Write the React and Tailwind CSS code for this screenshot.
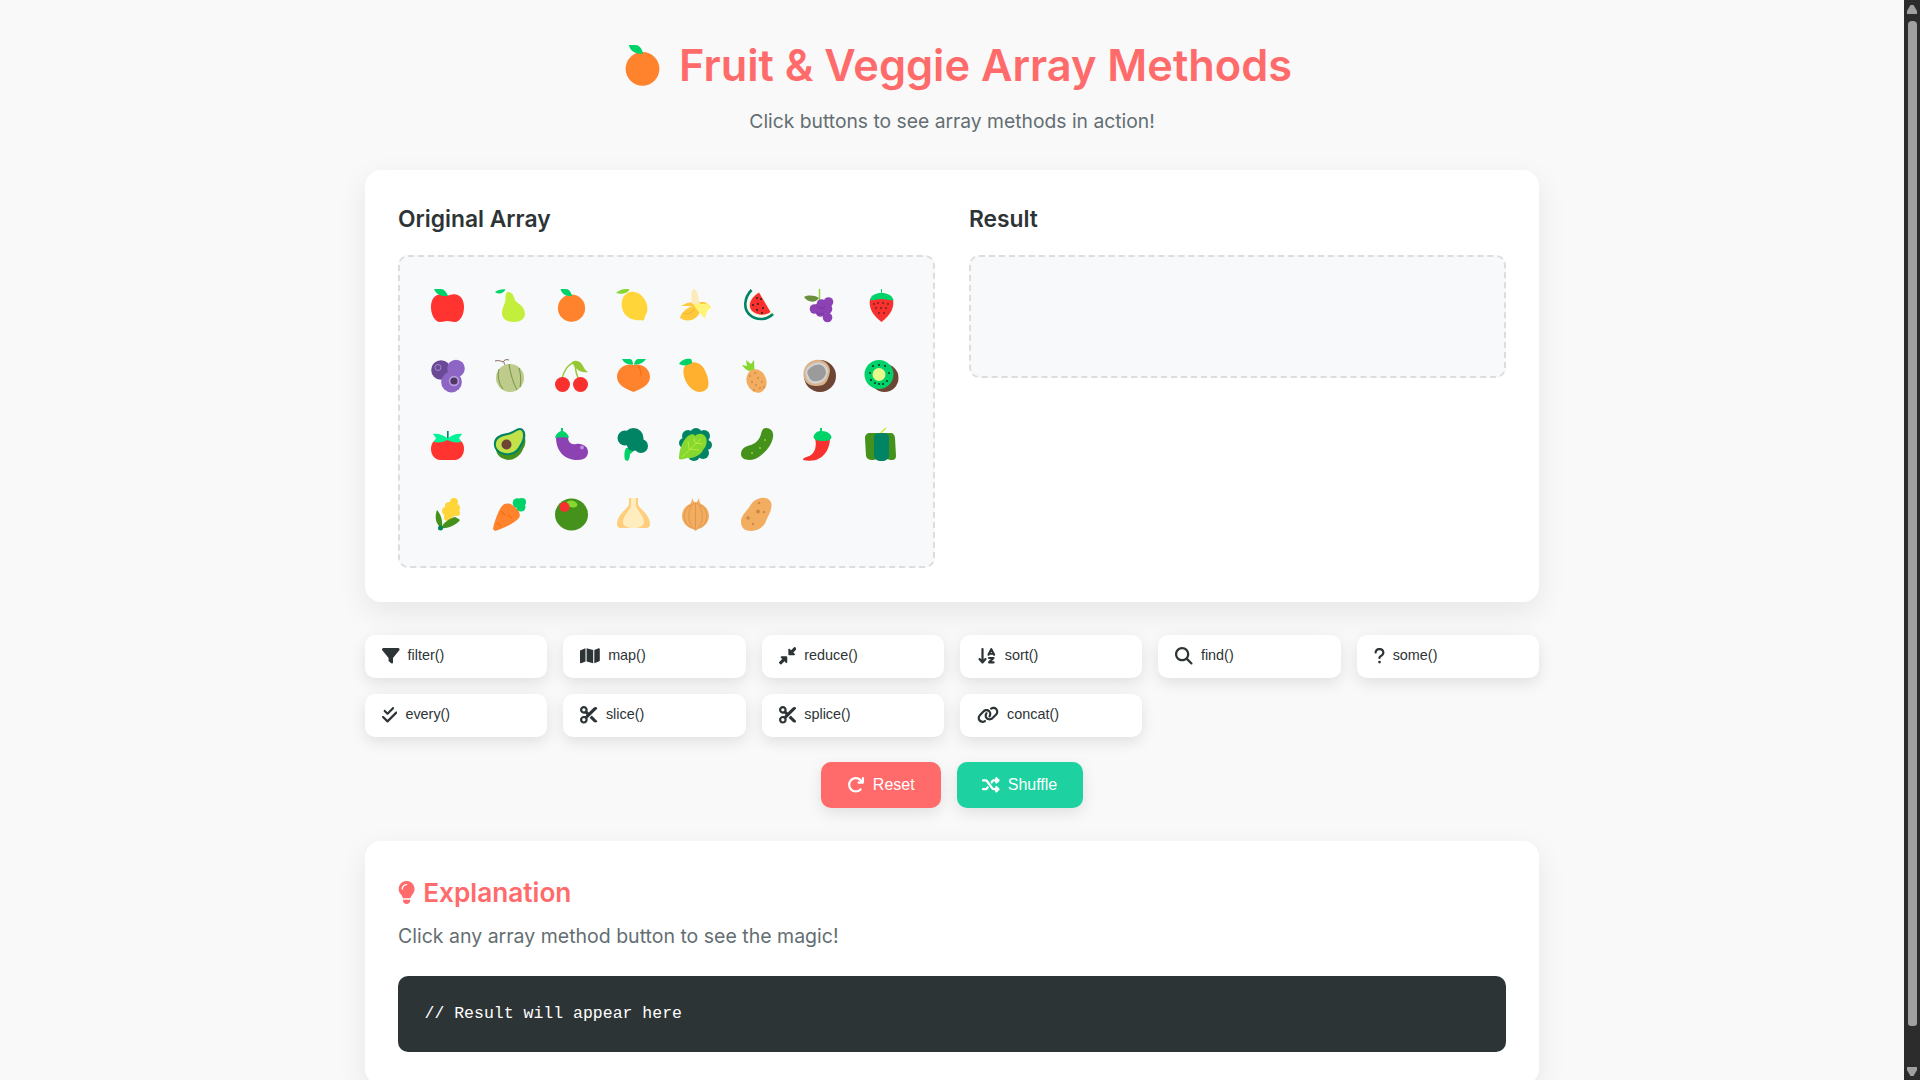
import React from 'react'
import {
  FaFilter, FaMap, FaDownLeftAndUpRightToCenter, FaArrowDownAZ, FaMagnifyingGlass, FaQuestion,
  FaCheckDouble, FaScissors, FaLink, FaArrowRotateRight, FaShuffle, FaLightbulb
} from 'react-icons/fa6'

const Leaf = ({ d, fill = '#00D26A' }) => <path d={d} fill={fill} />
const Dots = ({ pts, r = 0.8, fill = '#1C1C1C' }) => (
  <>{pts.map((p, i) => <circle key={i} cx={p[0]} cy={p[1]} r={r} fill={fill} />)}</>
)

const Orange = () => (
  <>
    <circle cx="16.5" cy="19.2" r="13.6" fill="#FF822D" />
    <Leaf d="M5.5 0H11C14 0 16 3 17 7C12 7.5 7 6 5.5 0Z" />
  </>
)

const emojis = [
  // apple
  <>
    <path d="M8 5.500C11 4.500 14 6 16.500 6.500C19 6 22 4.500 25 5.500C30 6.500 33 11 33 18C33 26 29 33 24 33C21 33 19 32 16.500 32C14 32 12 33 9 33C4 33 0 26 0 18C0 11 3 6.500 8 5.500Z" fill="#FF3330" />
    <Leaf d="M3 0H10C13 0 15.5 3 17 7C11 7.5 5 6 3 0Z" />
  </>,
  // pear
  <>
    <path d="M15 3C19 3 20.500 6 21.500 10C22.500 14 32 16 32 25C32 30 27 33 21 33C14 33 9 30 9 24C9 18 12.500 15 12.500 10C12.500 6 13 3 15 3Z" fill="#C3EF3C" />
    <Leaf d="M2 3C5 1 9 0 12.500 0.500C11 4 6 6 2 3Z" />
  </>,
  <Orange />,
  // lemon
  <>
    <path d="M13 3C20 2 26 6 29 13C31 18 31 23 28 27C28 30 26 33 24 31C17 32 9 29 6 22C3 14 5 5 13 3Z" fill="#FFD53A" />
    <Leaf d="M-1 4C2 1 7 -1 12.500 0.500C11 4 5 6 -1 4Z" fill="#86D72F" />
  </>,
  // banana
  <>
    <path d="M8 14L14 13L16 18L9 17L2 17C4 16 6 15 8 14Z" fill="#FFC83D" />
    <path d="M20 13L26 13L32 18L24 20Z" fill="#FFC83D" />
    <path d="M1 29C2 24 7 19 14 17C18 16 21 19 21 22C20 29 10 35 1 29Z" fill="#FFC83D" />
    <path d="M14 0C17 0 18 3 19 6C20 9 20 12 20 15H13C12 10 12 3 14 0Z" fill="#FCEBBB" />
    <path d="M14 15H24C27 14 30 16 32 19C29 20 27 23 26 30C24 27 20 24 14 15Z" fill="#FFF478" />
    <path d="M4 24C8 26 13 24 16 20" stroke="#E3A72C" strokeWidth="0.6" fill="none" />
  </>,
  // watermelon
  <>
    <path d="M10.500 1C3 9 2 20 9 26C16 32 26 31 32 25" stroke="#008463" strokeWidth="2.600" fill="none" />
    <path d="M18 3L31 24C24 29 15 28 10 23C5 17 8 9 18 3Z" fill="#FFF3D7" />
    <path d="M18 3.500L29.500 23C24 27 16 26.500 11 22C6.500 17 9 9 18 3.500Z" fill="#F8312F" />
    <Dots pts={[[16, 9], [20, 10], [12, 16], [17, 15], [22, 19], [16, 21], [21, 24]]} r="0.9" />
  </>,
  // grapes
  <>
    <path d="M16.500 0V11" stroke="#86D72F" strokeWidth="1.400" />
    <Leaf d="M1 8C5 6 11 6 16 9C13 14 5 14 1 8Z" fill="#6B8E3F" />
    {[[25.500, 13], [18.500, 15], [11.500, 20], [24.500, 20], [17.500, 23], [24.500, 28.500], [16, 19]].map((p, i) => (
      <circle key={i} cx={p[0]} cy={p[1]} r="4.800" fill="#8C42B3" />
    ))}
    <path d="M14 17C16 20 20 20 22 17M13 24C15 25 18 26 21 24" stroke="#6E2E96" strokeWidth="0.700" fill="none" />
  </>,
  // strawberry
  <>
    <path d="M5 10H28C29.500 18 26 26 16.500 33C7 26 3.500 18 5 10Z" fill="#F8312F" />
    <path d="M16 0H17V4C22 4 27 6 28.500 11C25 12 21 10 16.500 10C12 10 8 12 5 11C6 6 11 4 16 4Z" fill="#00D26A" />
    <Dots pts={[[9, 15], [13, 14], [18, 14], [23, 15], [11, 19], [16, 19], [21, 19], [14, 24], [19, 24]]} />
  </>,
  // blueberries
  <>
    <circle cx="10" cy="11" r="9.800" fill="#6A4A96" />
    <circle cx="25" cy="9.500" r="8.800" fill="#8D65C5" />
    <circle cx="20.500" cy="23" r="10.400" fill="#8D65C5" />
    <circle cx="7" cy="8.500" r="3" fill="none" stroke="#A889D4" strokeWidth="1" />
    <circle cx="23" cy="22" r="5.200" fill="#B4A0DC" />
    <circle cx="23" cy="22" r="3.600" fill="#533566" />
  </>,
  // melon
  <>
    <path d="M2 2C5 1 8 2 10 3C11 1 13 0 16 1M11 3C11 5 12 6 13 7" stroke="#6D4534" strokeWidth="0.800" fill="none" />
    <circle cx="17" cy="19" r="14" fill="#BECB8B" />
    <path d="M6 10C4 17 6 25 10 30M16 5C17 13 20 24 24 31M26 9C28 15 28 23 27 28" stroke="#5D8A3A" strokeWidth="0.800" fill="none" />
  </>,
  // cherries
  <>
    <path d="M7 20C8 13 13 5 20 3C20 9 21 15 24 21" stroke="#96C834" strokeWidth="1.500" fill="none" />
    <Leaf d="M17 3C22 0 26 3 28 7C29 9 31 12 33 13C27 14 21 12 17 3Z" fill="#96C834" />
    <circle cx="7.500" cy="25.500" r="7.500" fill="#F8312F" />
    <circle cx="25.500" cy="25.500" r="7.500" fill="#F8312F" />
  </>,
  // peach
  <>
    <path d="M0 18C0 10 8 4 16.500 6C25 4 33 10 33 18C33 26 24 30 16.500 33C9 30 0 26 0 18Z" fill="#FF822D" />
    <path d="M21 7C23 9 24 13 24 17" stroke="#F8700F" strokeWidth="1.200" fill="none" />
    <Leaf d="M5 0H13C15 0 16 3 16 5.500C11 6 7 4 5 0Z" />
    <Leaf d="M29 0H21C19 0 17.500 3 17 5.500C22 6 26 4 29 0Z" />
  </>,
  // mango
  <>
    <path d="M8 5C13 2 20 3 24 8C27 13 31 21 29 28C27 33 19 35 13 30C8 26 5 20 4.500 14C4 10 5 7 8 5Z" fill="#FFB02E" />
    <Leaf d="M0 5C2 1 7 -1 12 0C13 1 13 3 13 4C8 7 4 7 0 5Z" />
  </>,
  // pineapple
  <>
    <Leaf d="M1 6L6 7L5 1L10 5L13 1L13.500 11L8 12C5 11 3 9 1 6Z" fill="#86D72F" />
    <ellipse cx="15.500" cy="22" rx="9.800" ry="12" transform="rotate(-20 15.500 22)" fill="#F3AD61" />
    <Dots pts={[[9, 17], [14, 14], [17, 19], [11, 23], [15, 26], [21, 23], [19, 29], [13, 31], [23, 28]]} r="1.200" fill="#D9964F" />
  </>,
  // coconut
  <>
    <circle cx="17" cy="17" r="16" fill="#6D4534" />
    <path d="M1 11C3 4 10 0 17 1C23 2 27 7 27 12C26 17 25 23 20 26C13 28 7 27 4 24C0 20 0 15 1 11Z" fill="#D9B38C" />
    <path d="M2.500 12C5 6 11 3 17 3.500C23 5 25 9 25 13C24 18 21 23 16 24C10 26 6 23 4 20C3 17 2 15 2.500 12Z" fill="#D3D3D3" />
    <path d="M4.500 12C7 8 12 5 17 5.500C21.500 7 23 11 23 14C22 18 19 22 14 22C10 23 7 21 6 18C5 16 4 14 4.500 12Z" fill="#9B9B9B" />
  </>,
  // kiwi
  <>
    <circle cx="19.500" cy="19" r="14" fill="#6D4534" />
    <circle cx="14" cy="15.500" r="14.500" fill="#00D26A" />
    <circle cx="14" cy="15.500" r="6.500" fill="#E7FB8C" />
    <Dots pts={[[14, 6], [8, 7], [20, 7], [5, 14], [24, 14], [6, 21], [22, 22], [14, 25], [10, 24], [18, 25]]} r="0.900" />
  </>,
  // tomato
  <>
    <path d="M8 10H25C30 12 33 15 33 21C33 28 28 32 24 32H9C5 32 0 28 0 21C0 15 3 12 8 10Z" fill="#FF3330" />
    <path d="M16 3H17.500V10C21 7 26 5 31 6L28 10L30 14C25 15 20 14 16.500 12C13 14 8 15 3 14L5 10L2 6C7 5 12 7 16 10Z" fill="#00F397" />
    <path d="M16 3H17.500V10H16Z" fill="#008463" />
  </>,
  // avocado
  <>
    <path d="M28 1C32 2 33 6 32 10C33 14 32 18 30 21C28 27 22 32 15 32C9 31 4 28 3 22Z" fill="#44911B" />
    <path d="M27 0C30 0 32 3 32 7C32 12 31 15 28 19C25 25 19 28 12 27C4 26 0 20 1 14C2 8 8 6 14 5C20 4 23 0 27 0Z" fill="#008463" />
    <path d="M27 2C29 2 30 5 30 7C30 12 28 15 26 18C24 23 18 26 12 25C6 24 2 20 3 15C4 10 9 8 15 7C20 6 24 2 27 2Z" fill="#C3E24A" />
    <circle cx="13.500" cy="16.500" r="5" fill="#6D4534" />
  </>,
  // eggplant
  <>
    <path d="M1 9H13C13 14 16 17 21 16C28 15 33 19 33 24C33 29 29 32 23 32C10 32 1 24 1 9Z" fill="#8C42B3" />
    <path d="M6 0H8V3C11 4 13 6 14 10C10 9 4 9 0 10C1 6 3 4 6 3Z" fill="#00D26A" />
    <circle cx="27" cy="19.500" r="2" fill="#B88FE0" />
  </>,
  // broccoli
  <>
    <path d="M8 32C7 28 7 24 9 20L13 20L18 20C17 23 15 25 13 26C13 29 12 31 11 33Z" fill="#00D26A" />
    <circle cx="16.500" cy="10" r="10" fill="#008463" />
    <circle cx="8" cy="10" r="7.500" fill="#008463" />
    <circle cx="24" cy="18" r="7" fill="#008463" />
    <circle cx="16" cy="17" r="6" fill="#008463" />
  </>,
  // lettuce
  <>
    {[[17, 6, 6], [9, 8, 6], [25, 8, 6], [28, 17, 5], [24, 25, 6], [15, 27, 6], [5, 15, 5]].map((p, i) => (
      <circle key={i} cx={p[0]} cy={p[1]} r={p[2]} fill="#008463" />
    ))}
    <path d="M0 31C0 24 2 16 7 10C10 6 15 5 16 8C20 4 26 6 27 10C29 15 26 20 24 22C22 27 14 31 8 30C5 31 2 32 0 31Z" fill="#86D72F" />
    <path d="M3 29L22 11M10 21L9 13M10 21L20 22M16 15L15 10M16 15L24 16" stroke="#C3EF3C" strokeWidth="0.800" fill="none" />
  </>,
  // cucumber
  <>
    <path d="M25 0C30 0 33 4 32 9C31 17 24 26 14 31C8 33 0 32 0 26C0 21 4 18 10 17C16 15 19 10 20 6C21 2 22 0 25 0Z" fill="#44911B" />
    <Dots pts={[[11, 25], [19, 20], [24, 12]]} r="1" fill="#86D72F" />
  </>,
  // chili
  <>
    <path d="M12 10H27C27 20 22 29 13 32C8 33 4 33 0 32C0 29 5 29 8 27C12 24 14 18 12 10Z" fill="#F8312F" />
    <path d="M17 0H19V3C24 3 28 6 28.500 9C28 12 26 13 20 13C15 13 11 12 10.500 9C11 6 14 3 17 3Z" fill="#00D26A" />
  </>,
  // pepper
  <>
    <path d="M16 5C17 3 19 2 21 0" stroke="#C3EF3C" strokeWidth="1.500" fill="none" />
    <path d="M5 5C2 5 0 7 0 10L1 28C2 32 6 32 8 32C10 32 11 31 12 31H22C23 31 24 32 26 32C28 32 31 32 31 28L30 10C30 7 28 5 26 5Z" fill="#44911B" />
    <path d="M9 9C9 6 12 5 16.500 5C21 5 24 6 24 9V27C24 31 21 33 16.500 33C12 33 9 31 9 27Z" fill="#008463" />
  </>,
  // corn
  <>
    {[[23, 4, 4], [18, 8, 4], [25, 10, 4], [15, 13, 4], [21, 14, 5], [26, 15, 3], [17, 19, 4]].map((p, i) => (
      <circle key={i} cx={p[0]} cy={p[1]} r={p[2]} fill="#FFD53A" />
    ))}
    <path d="M8 28C4 24 4 17 6 12C9 15 12 22 11 29Z" fill="#44911B" />
    <path d="M10 30C12 25 19 20 24 19C26 20 28 21 29 22C25 27 17 31 10 30Z" fill="#44911B" />
    <circle cx="9.500" cy="30" r="2.500" fill="#008463" />
  </>,
  // carrot
  <>
    <path d="M0 31C1 25 5 13 9 8C12 4 18 5 22 9C26 12 28 17 26 20C21 26 8 31 2 33Z" fill="#FF822D" />
    <path d="M8 13L12 17M15 17L19 20M4 25L8 28" stroke="#F8700F" strokeWidth="1.500" />
    <circle cx="24.500" cy="5" r="4.800" fill="#00D26A" />
    <circle cx="29" cy="4" r="4" fill="#00D26A" />
    <circle cx="28" cy="9" r="4.500" fill="#00D26A" />
  </>,
  // olive
  <>
    <ellipse cx="16.500" cy="16.500" rx="16.500" ry="16" fill="#44911B" />
    <ellipse cx="17" cy="6" rx="5.500" ry="3.300" transform="rotate(15 17 6)" fill="#86D72F" />
    <circle cx="9.500" cy="9" r="5" fill="#F8312F" />
  </>,
  // garlic
  <>
    <path d="M12 0H21V6C21 10 33 16 33 26C33 31 28 30 25 30C22 30 19 30 16.500 30C14 30 11 30 8 30C5 30 0 31 0 26C0 16 12 10 12 6Z" fill="#FFCE7C" />
    <path d="M14 0H19V7C19 12 27 17 27 24C27 28 22 30 16.500 30C11 30 6 28 6 24C6 17 14 12 14 7Z" fill="#FFEDC0" />
  </>,
  // onion
  <>
    <path d="M13 0L15 4H18L20 0C20 3 21 5 22 6C27 8 30 13 30 18C30 25 24 30 19 31L16.500 33L14 31C9 30 3 25 3 18C3 13 6 8 11 6C12 5 13 3 13 0Z" fill="#F3AD61" />
    <path d="M15 5C9 10 7 24 15 31M18 5C24 10 26 24 18 31M16.500 5V31M12 7C3 12 3 24 12 30M21 7C30 12 30 24 21 30" stroke="#D3883E" strokeWidth="0.600" fill="none" />
  </>,
  // potato
  <>
    <path d="M20 0C27 -1 31 3 30.500 8C30 14 27 18 25 23C23 29 17 33 10 33C3 33 0 29 0 24C0 17 6 13 9 8C12 3 15 1 20 0Z" fill="#F3AD61" />
    <Dots pts={[[18, 5], [12, 26], [23, 14]]} r="1.200" fill="#C98A45" />
    <circle cx="17" cy="13.500" r="2" fill="#C98A45" />
    <circle cx="7" cy="20" r="1.800" fill="#C98A45" />
  </>
]

const Emoji = ({ children, className }) => (
  <svg viewBox="0 0 33 33" className={className} style={{ overflow: 'visible' }}>{children}</svg>
)

const methods = [
  ['filter()', FaFilter, 'h-[17.6px] w-[17.6px]'],
  ['map()', FaMap, 'h-[17.6px] w-[19.8px]'],
  ['reduce()', FaDownLeftAndUpRightToCenter, 'h-[17.6px] w-[17.6px]'],
  ['sort()', FaArrowDownAZ, 'h-[17.6px] w-[19.8px]'],
  ['find()', FaMagnifyingGlass, 'h-[17.6px] w-[17.6px]'],
  ['some()', FaQuestion, 'h-[17.6px] w-[11px]'],
  ['every()', FaCheckDouble, 'h-[17.6px] w-[15.4px]'],
  ['slice()', FaScissors, 'h-[17.6px] w-[17.6px]'],
  ['splice()', FaScissors, 'h-[17.6px] w-[17.6px]'],
  ['concat()', FaLink, 'h-[17.6px] w-[22px]']
]

export default function App() {
  return (
    <div className="flex items-start bg-[#f9f9f9] font-['Inter',sans-serif] text-[#2d3436]">
      <main className="min-w-0 flex-1">
        <div className="mx-auto w-[1174px] pt-[38px] pb-[38px]">
          {/* Header */}
          <header className="mb-[35px] text-center">
            <h1 className="flex items-center justify-center gap-[16px] pl-[10px] text-[43.3px] leading-[54px] font-semibold text-[#ff6b6b]">
              <Emoji className="h-[41px] w-[41px]"><Orange /></Emoji>
              <span>Fruit &amp; Veggie Array Methods</span>
            </h1>
            <p className="mt-[16px] text-[19.3px] leading-[27px] text-[#636e72]">Click buttons to see array methods in action!</p>
          </header>

          {/* Arrays card */}
          <section className="grid grid-cols-2 gap-[34px] rounded-[16px] bg-white p-[33px] pb-[34px] shadow-[0_10px_30px_rgba(0,0,0,0.08)]">
            <div>
              <h2 className="mb-[20px] text-[22.8px] leading-[32px] font-semibold">Original Array</h2>
              <div className="grid grid-cols-[repeat(8,47px)] gap-x-[15px] gap-y-[16.5px] rounded-[10px] border-2 border-dashed border-[#dddddd] bg-[#f8f9fa] px-[24px] pt-[22px] pb-[25px]">
                {emojis.map((e, i) => (
                  <div key={i} className="flex h-[53px] items-center justify-center">
                    <Emoji className="h-[33px] w-[33px]">{e}</Emoji>
                  </div>
                ))}
              </div>
            </div>
            <div>
              <h2 className="mb-[20px] text-[22.8px] leading-[32px] font-semibold">Result</h2>
              <div className="h-[123px] rounded-[10px] border-2 border-dashed border-[#dddddd] bg-[#f8f9fa]" />
            </div>
          </section>

          {/* Method buttons */}
          <div className="mt-[33px] grid grid-cols-6 gap-4">
            {methods.map(([label, Icon, size]) => (
              <button key={label} className="flex h-[43px] items-center gap-2 rounded-[10px] bg-white px-[17px] font-['Liberation_Sans',sans-serif] text-[14.4px] text-[#2d3436] shadow-[0_5px_15px_rgba(0,0,0,0.1)]">
                <Icon className={size} />
                <span>{label}</span>
              </button>
            ))}
          </div>

          <div className="mt-[25px] flex justify-center gap-4">
            <button className="flex h-[46px] items-center gap-2 rounded-[10px] bg-[#ff6b6b] px-[26px] font-['Liberation_Sans',sans-serif] text-[16px] text-white shadow-[0_5px_15px_rgba(0,0,0,0.1)]">
              <FaArrowRotateRight className="h-[17.6px] w-[17.6px]" /> Reset
            </button>
            <button className="flex h-[46px] items-center gap-2 rounded-[10px] bg-[#1dd1a1] px-[25.5px] font-['Liberation_Sans',sans-serif] text-[16px] text-white shadow-[0_5px_15px_rgba(0,0,0,0.1)]">
              <FaShuffle className="h-[17.6px] w-[17.6px]" /> Shuffle
            </button>
          </div>

          {/* Explanation */}
          <section className="mt-[33px] rounded-[16px] bg-white p-[33px] pt-[34px] shadow-[0_10px_30px_rgba(0,0,0,0.08)]">
            <h2 className="flex items-center gap-[8px] text-[26.2px] leading-[36px] font-semibold text-[#ff6b6b]">
              <FaLightbulb className="h-[23px] w-[17.25px]" /> Explanation
            </h2>
            <p className="mt-[12px] text-[19.5px] leading-[27px] text-[#636e72]">Click any array method button to see the magic!</p>
            <pre className="mt-[26px] rounded-[10px] bg-[#2d3436] px-[26.5px] py-[26px] font-['Liberation_Mono',monospace] text-[16.5px] leading-[24px] text-white">// Result will appear here</pre>
          </section>
        </div>
      </main>

      {/* Window scrollbar */}
      <aside className="sticky top-0 flex h-screen w-4 shrink-0 flex-col items-center bg-[#2c2c2c]">
        <svg viewBox="0 0 10 9" className="mt-[5px] h-[9px] w-[10px]"><path d="M3.500 0H6.500L10 6V9H0V6Z" fill="#a0a0a0" /></svg>
        <div className="mt-[6.7px] ml-[1px] h-[1005px] w-[9px] rounded-t-[4px] rounded-b-[3px] bg-[#a0a0a0]" />
        <svg viewBox="0 0 10 9" className="mt-[41.3px] h-[9px] w-[10px]"><path d="M0 0H10V3L6.500 9H3.500L0 3Z" fill="#a0a0a0" /></svg>
      </aside>
    </div>
  )
}
